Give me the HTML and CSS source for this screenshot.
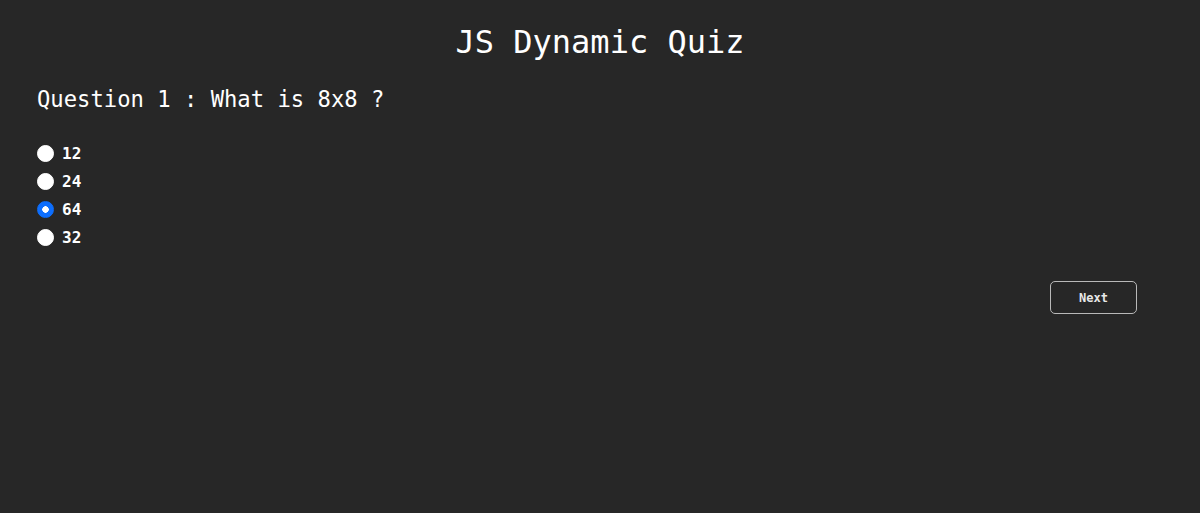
FILE: index.html
```html
<!DOCTYPE html>
<html>
<head>
<meta charset="utf-8">
<link rel="stylesheet" href="styles.css">
</head>
<body>
<h1 class="title">JS Dynamic Quiz</h1>
<div class="quiz">
  <h2 class="question">Question 1 : What is 8x8 ?</h2>
  <div class="options">
    <label class="option"><input type="radio" name="q" class="radio"><span>12</span></label>
    <label class="option"><input type="radio" name="q" class="radio"><span>24</span></label>
    <label class="option"><input type="radio" name="q" class="radio" checked><span>64</span></label>
    <label class="option"><input type="radio" name="q" class="radio"><span>32</span></label>
  </div>
  <div class="actions">
    <button class="next">Next</button>
  </div>
</div>
</body>
</html>
```
FILE: styles.css
```css
html, body {
  margin: 0;
  padding: 0;
  background: #272727;
  color: #ffffff;
  font-family: "DejaVu Sans Mono", "Liberation Mono", monospace;
  height: 100%;
}
.title {
  margin: 0;
  padding-top: 22px;
  text-align: center;
  font-size: 32px;
  font-weight: normal;
  line-height: 40px;
}
.quiz {
  padding: 0 63px 0 37px;
}
.question {
  margin: 22px 0 0 0;
  font-size: 22.2px;
  font-weight: normal;
  line-height: 30px;
}
.options {
  margin-top: 29px;
  display: flex;
  flex-direction: column;
  gap: 8px;
}
.option {
  display: flex;
  align-items: center;
  gap: 8px;
  height: 20px;
  font-size: 16px;
  font-weight: bold;
}
.radio {
  appearance: none;
  -webkit-appearance: none;
  margin: 0;
  width: 17px;
  height: 17px;
  border-radius: 50%;
  background: #ffffff;
  border: 1px solid #ffffff;
  box-sizing: border-box;
}
.radio:checked {
  background: radial-gradient(circle, #ffffff 0 3px, #0d6efd 3.5px);
  border-color: #0d6efd;
}
.actions {
  display: flex;
  justify-content: flex-end;
  margin-top: 34px;
}
.next {
  width: 87px;
  height: 33px;
  background: transparent;
  color: #e8e8e8;
  border: 1px solid #b9b9b9;
  border-radius: 5px;
  font-family: "DejaVu Sans Mono", "Liberation Mono", monospace;
  font-size: 12px;
  font-weight: bold;
}
```
